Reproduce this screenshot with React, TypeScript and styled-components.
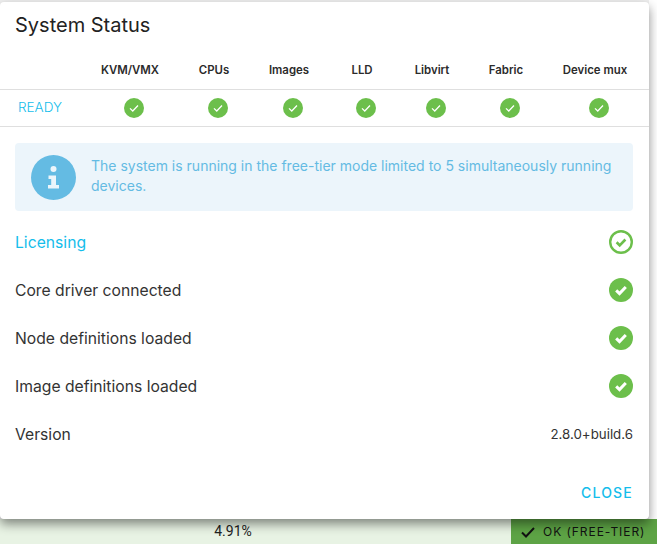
import React from 'react';
import styled, { createGlobalStyle } from 'styled-components';

const GlobalStyle = createGlobalStyle`
  html, body {
    margin: 0;
    height: 100%;
    overflow: hidden;
    background: #f0f0f0;
  }
  #root {
    height: 100%;
  }
`;

const Page = styled.div`
  width: 657px;
  height: 544px;
  display: flex;
  flex-direction: column;
  padding-top: 2px;
  box-sizing: border-box;
  font-family: Inter, 'Noto Sans', sans-serif;
  background: linear-gradient(to right, #f0f0f0 649px, #ffffff 649px);
  overflow: hidden;
`;

const Modal = styled.section`
  position: relative;
  z-index: 2;
  width: 649px;
  height: 517px;
  flex: none;
  display: flex;
  flex-direction: column;
  background: #ffffff;
  border-radius: 4px;
  box-shadow: 0 5px 11px rgba(0, 0, 0, 0.45);
`;

const Title = styled.h2`
  margin: 0;
  padding: 11px 15px 0;
  height: 47px;
  box-sizing: border-box;
  font-size: 20px;
  line-height: 24px;
  font-weight: 400;
  color: #222222;
`;

const TableRow = styled.div<{ $head?: boolean }>`
  display: grid;
  grid-template-columns: 90px 80px 88px 62px 84px 56px 92px 86px 11px;
  align-items: center;
  height: ${(p) => (p.$head ? '41px' : '37px')};
  box-sizing: border-box;
  border-bottom: 1px solid #dfdfdf;
`;

const HeadCell = styled.div`
  padding-top: 2px;
  font-size: 11.4px;
  font-weight: 600;
  color: #2b2b2b;
  text-align: center;
  white-space: nowrap;
`;

const ReadyCell = styled.div`
  padding: 0 0 2px 18px;
  font-size: 13.5px;
  font-weight: 300;
  color: #14bdeb;
`;

const IconCell = styled.div`
  display: flex;
  justify-content: center;
  padding-left: 8px;
`;

const Content = styled.div`
  flex: 1;
  display: flex;
  flex-direction: column;
  padding: 16px 16px 0 15px;
`;

const Notice = styled.div`
  display: flex;
  align-items: center;
  gap: 15px;
  height: 68px;
  box-sizing: border-box;
  padding: 0 16px;
  background: #ecf5fb;
  border-radius: 4px;
  margin-bottom: 7px;
`;

const NoticeText = styled.p`
  margin: 0 0 2px;
  font-size: 14px;
  line-height: 20px;
  color: #64bbe3;
`;

const StatusRow = styled.div`
  display: flex;
  align-items: center;
  justify-content: space-between;
  height: 48px;
`;

const StatusLabel = styled.span<{ $link?: boolean }>`
  font-size: 15.7px;
  font-weight: 400;
  color: ${(p) => (p.$link ? '#14bdeb' : '#333333')};
`;

const VersionText = styled.span`
  font-size: 13.3px;
  color: #333333;
`;

const Actions = styled.div`
  display: flex;
  justify-content: flex-end;
  margin-top: auto;
  padding: 0 16px 18px 0;
`;

const CloseButton = styled.button`
  border: none;
  background: none;
  padding: 0;
  font-family: inherit;
  font-size: 14px;
  font-weight: 500;
  letter-spacing: 1.2px;
  color: #14bdeb;
`;

const StatusBar = styled.footer`
  flex: 1;
  display: flex;
  background: #ffffff;
`;

const Usage = styled.div`
  width: 466px;
  flex: none;
  padding-top: 4px;
  background: #e8f3e4;
  font-family: Roboto, sans-serif;
  font-size: 14px;
  color: #222222;
  text-align: center;
`;

const Gap = styled.div`
  width: 45px;
  background: #e8f3e4;
`;

const Badge = styled.div`
  flex: 1;
  display: flex;
  align-items: center;
  gap: 7px;
  padding-left: 9px;
  background: #5da345;
  font-size: 12px;
  letter-spacing: 0.95px;
  color: #111111;
  white-space: nowrap;
`;

const checks = ['KVM/VMX', 'CPUs', 'Images', 'LLD', 'Libvirt', 'Fabric', 'Device mux'];

const SolidCheck = ({ size, weight }: { size: number; weight: number }) => (
  <svg width={size} height={size} viewBox="0 0 24 24">
    <circle cx="12" cy="12" r="12" fill="#6cbf4b" />
    <path d="M7.2 12.4l3.3 3.2 6.3-6.6" fill="none" stroke="#fff" strokeWidth={weight} />
  </svg>
);

const RingCheck = () => (
  <svg width="24" height="24" viewBox="0 0 24 24">
    <circle cx="12" cy="12" r="10.8" fill="none" stroke="#6cbf4b" strokeWidth="2.4" />
    <path d="M7.6 12.3l3.1 3 5.7-5.8" fill="none" stroke="#6cbf4b" strokeWidth="2.6" />
  </svg>
);

const InfoIcon = () => (
  <svg width="45" height="45" viewBox="0 0 45 45" style={{ flex: 'none' }}>
    <circle cx="22.5" cy="22.5" r="22.5" fill="#64bbe3" />
    <circle cx="22.5" cy="14" r="3" fill="#ecf5fb" />
    <path d="M17.5 20.5h7.5v9.5h3v3.5h-11v-3.5h3.2v-6h-2.7z" fill="#ecf5fb" />
  </svg>
);

const App = () => {
  return (
    <Page>
      <GlobalStyle />
      <Modal>
        <Title>System Status</Title>
        <TableRow $head>
          <div />
          {checks.map((name) => (
            <HeadCell key={name}>{name}</HeadCell>
          ))}
        </TableRow>
        <TableRow>
          <ReadyCell>READY</ReadyCell>
          {checks.map((name) => (
            <IconCell key={name}>
              <SolidCheck size={20} weight={1.5} />
            </IconCell>
          ))}
        </TableRow>
        <Content>
          <Notice>
            <InfoIcon />
            <NoticeText>The system is running in the free-tier mode limited to 5 simultaneously running devices.</NoticeText>
          </Notice>
          <StatusRow>
            <StatusLabel $link>Licensing</StatusLabel>
            <RingCheck />
          </StatusRow>
          <StatusRow>
            <StatusLabel>Core driver connected</StatusLabel>
            <SolidCheck size={24} weight={3} />
          </StatusRow>
          <StatusRow>
            <StatusLabel>Node definitions loaded</StatusLabel>
            <SolidCheck size={24} weight={3} />
          </StatusRow>
          <StatusRow>
            <StatusLabel>Image definitions loaded</StatusLabel>
            <SolidCheck size={24} weight={3} />
          </StatusRow>
          <StatusRow>
            <StatusLabel>Version</StatusLabel>
            <VersionText>2.8.0+build.6</VersionText>
          </StatusRow>
        </Content>
        <Actions>
          <CloseButton>CLOSE</CloseButton>
        </Actions>
      </Modal>
      <StatusBar>
        <Usage>4.91%</Usage>
        <Gap />
        <Badge>
          <svg width="16" height="16" viewBox="0 0 16 16">
            <path d="M2 8.5l4 4 8-8.5" fill="none" stroke="#111" strokeWidth="2" />
          </svg>
          OK (FREE-TIER)
        </Badge>
      </StatusBar>
    </Page>
  );
};

export default App;
